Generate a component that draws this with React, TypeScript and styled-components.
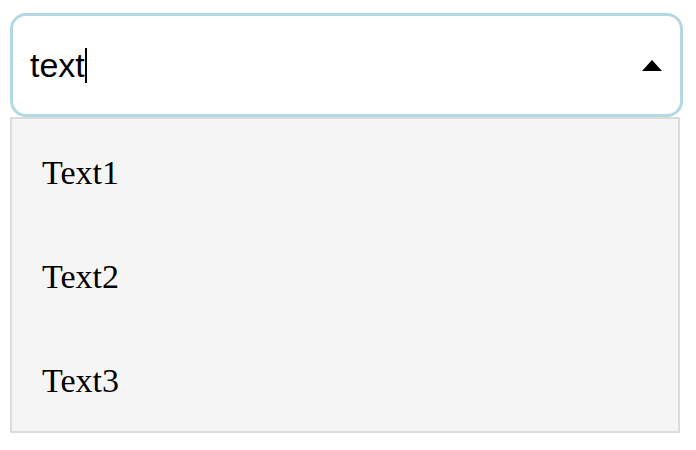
import { createGlobalStyle } from 'styled-components';
import styled from 'styled-components';

const GlobalStyle = createGlobalStyle`
  html, body {
    margin: 0;
    padding: 0;
    background: #fff;
  }
`;

const Page = styled.div`
  padding: 13px 13px 0 10px;
  width: 673px;
`;

const Field = styled.div`
  box-sizing: border-box;
  height: 104px;
  display: flex;
  align-items: center;
  justify-content: space-between;
  padding: 0 18px 0 17px;
  border: 3px solid #b3d7e3;
  border-radius: 16px;
  background: #fff;
`;

const Value = styled.div`
  display: flex;
  align-items: center;
  font-family: 'Liberation Sans', Arial, sans-serif;
  font-size: 34px;
  line-height: 38px;
  color: #000;
`;

const Caret = styled.span`
  display: inline-block;
  width: 2px;
  height: 35px;
  background: #000;
`;

const List = styled.ul`
  box-sizing: border-box;
  width: 670px;
  margin: 0;
  padding: 0;
  list-style: none;
  background: #f5f5f5;
  border: 2px solid #dcdcdc;
`;

const Item = styled.li`
  box-sizing: border-box;
  height: 104px;
  display: flex;
  align-items: center;
  padding: 4px 0 0 30px;
  font-family: 'Liberation Serif', 'Times New Roman', serif;
  font-size: 34px;
  color: #000;
`;

const items = ['Text1', 'Text2', 'Text3'];

export default function App() {
  return (
    <>
      <GlobalStyle />
      <Page>
        <Field>
          <Value>
            text
            <Caret />
          </Value>
          <svg width="20" height="11" viewBox="0 0 20 11">
            <path d="M0 11 L10 0 L20 11 Z" fill="#000" />
          </svg>
        </Field>
        <List>
          {items.map((item) => (
            <Item key={item}>{item}</Item>
          ))}
        </List>
      </Page>
    </>
  );
}
